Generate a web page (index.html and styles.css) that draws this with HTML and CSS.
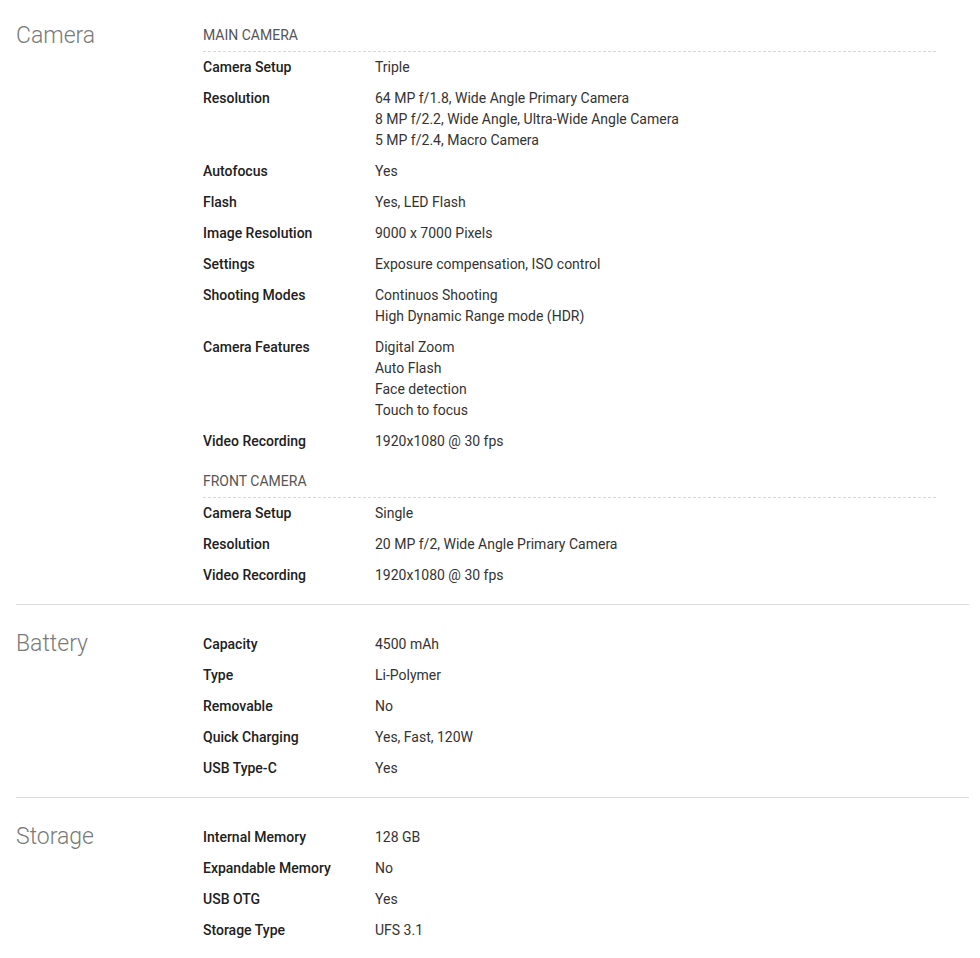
FILE: index.html
```html
<!DOCTYPE html>
<html lang="en">
<head>
<meta charset="utf-8">
<title>Specifications</title>
<link rel="stylesheet" href="styles.css">
</head>
<body>
<div class="specs">
  <section class="spec-section">
    <h2 class="spec-title">Camera</h2>
    <div class="spec-body">
      <div class="spec-group">
        <h3 class="group-heading">Main Camera</h3>
        <div class="row"><div class="label">Camera Setup</div><div class="value">Triple</div></div>
        <div class="row"><div class="label">Resolution</div><div class="value">64 MP f/1.8, Wide Angle Primary Camera<br>8 MP f/2.2, Wide Angle, Ultra-Wide Angle Camera<br>5 MP f/2.4, Macro Camera</div></div>
        <div class="row"><div class="label">Autofocus</div><div class="value">Yes</div></div>
        <div class="row"><div class="label">Flash</div><div class="value">Yes, LED Flash</div></div>
        <div class="row"><div class="label">Image Resolution</div><div class="value">9000 x 7000 Pixels</div></div>
        <div class="row"><div class="label">Settings</div><div class="value">Exposure compensation, ISO control</div></div>
        <div class="row"><div class="label">Shooting Modes</div><div class="value">Continuos Shooting<br>High Dynamic Range mode (HDR)</div></div>
        <div class="row"><div class="label">Camera Features</div><div class="value">Digital Zoom<br>Auto Flash<br>Face detection<br>Touch to focus</div></div>
        <div class="row"><div class="label">Video Recording</div><div class="value">1920x1080 @ 30 fps</div></div>
      </div>
      <div class="spec-group">
        <h3 class="group-heading">Front Camera</h3>
        <div class="row"><div class="label">Camera Setup</div><div class="value">Single</div></div>
        <div class="row"><div class="label">Resolution</div><div class="value">20 MP f/2, Wide Angle Primary Camera</div></div>
        <div class="row"><div class="label">Video Recording</div><div class="value">1920x1080 @ 30 fps</div></div>
      </div>
    </div>
  </section>
  <section class="spec-section">
    <h2 class="spec-title">Battery</h2>
    <div class="spec-body">
      <div class="row"><div class="label">Capacity</div><div class="value">4500 mAh</div></div>
      <div class="row"><div class="label">Type</div><div class="value">Li-Polymer</div></div>
      <div class="row"><div class="label">Removable</div><div class="value">No</div></div>
      <div class="row"><div class="label">Quick Charging</div><div class="value">Yes, Fast, 120W</div></div>
      <div class="row"><div class="label">USB Type-C</div><div class="value">Yes</div></div>
    </div>
  </section>
  <section class="spec-section">
    <h2 class="spec-title">Storage</h2>
    <div class="spec-body">
      <div class="row"><div class="label">Internal Memory</div><div class="value">128 GB</div></div>
      <div class="row"><div class="label">Expandable Memory</div><div class="value">No</div></div>
      <div class="row"><div class="label">USB OTG</div><div class="value">Yes</div></div>
      <div class="row"><div class="label">Storage Type</div><div class="value">UFS 3.1</div></div>
    </div>
  </section>
</div>
</body>
</html>
```
FILE: styles.css
```css
html, body {
  margin: 0;
  padding: 0;
  background: #fff;
}
body {
  font-family: Roboto, "Liberation Sans", Arial, sans-serif;
  font-size: 14px;
  line-height: 21px;
  color: #333;
}
.specs {
  padding: 0 11px 0 16px;
}
.spec-section {
  display: flex;
  padding: 24px 0 13px;
  border-bottom: 1px solid #dcdcdc;
}
.spec-section:first-child {
  padding-top: 25px;
}
.spec-section:last-child {
  border-bottom: none;
}
.spec-title {
  width: 187px;
  flex: none;
  margin: 0;
  padding-top: 5px;
  font-size: 23px;
  line-height: 19px;
  font-weight: 300;
  color: #7a7a7a;
}
.spec-section:first-child .spec-title {
  padding-top: 1px;
}
.spec-body {
  width: 733px;
  flex: none;
}
.spec-group + .spec-group {
  margin-top: 14px;
}
.group-heading {
  margin: 0;
  padding-bottom: 5px;
  border-bottom: 1px dashed #d8d8d8;
  font-size: 14px;
  line-height: 21px;
  font-weight: 400;
  text-transform: uppercase;
  color: #555;
}
.row {
  display: flex;
  padding: 5px 0;
}
.label {
  width: 172px;
  flex: none;
  font-weight: 500;
  color: #212121;
}
.value {
  color: #333;
}
```
